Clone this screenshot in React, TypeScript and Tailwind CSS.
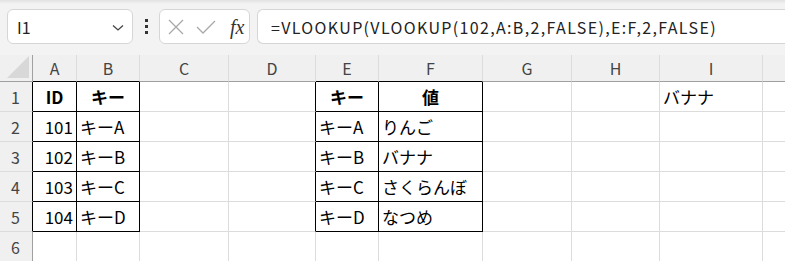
import React from "react";

const COLS = [
  { l: "A", w: 44 },
  { l: "B", w: 63 },
  { l: "C", w: 89 },
  { l: "D", w: 87 },
  { l: "E", w: 63 },
  { l: "F", w: 104 },
  { l: "G", w: 89 },
  { l: "H", w: 88 },
  { l: "I", w: 103 },
  { l: "", w: 60 },
];

type Cell = { t?: string; b?: boolean; align?: "l" | "c" | "r" };

const DATA: Record<string, Cell> = {
  A1: { t: "ID", b: true, align: "c" },
  B1: { t: "キー", b: true, align: "c" },
  A2: { t: "101", align: "r" },
  A3: { t: "102", align: "r" },
  A4: { t: "103", align: "r" },
  A5: { t: "104", align: "r" },
  B2: { t: "キーA" },
  B3: { t: "キーB" },
  B4: { t: "キーC" },
  B5: { t: "キーD" },
  E1: { t: "キー", b: true, align: "c" },
  F1: { t: "値", b: true, align: "c" },
  E2: { t: "キーA" },
  E3: { t: "キーB" },
  E4: { t: "キーC" },
  E5: { t: "キーD" },
  F2: { t: "りんご" },
  F3: { t: "バナナ" },
  F4: { t: "さくらんぼ" },
  F5: { t: "なつめ" },
  I1: { t: "バナナ" },
};

const inTable = (c: number, r: number) =>
  r >= 1 && r <= 5 && ((c >= 0 && c <= 1) || (c >= 4 && c <= 5));

const FONT = { fontFamily: '"Noto Sans CJK JP", "Noto Sans", sans-serif' };

export default function App() {
  const rows = [1, 2, 3, 4, 5, 6];
  return (
    <div className="w-[785px] h-[261px] overflow-hidden bg-white text-black" style={FONT}>
      {/* toolbar */}
      <div className="h-[55px] bg-[#f3f3f3] relative">
        <div className="absolute inset-x-0 top-0 h-[4px] bg-gradient-to-b from-[#e2e2e2] to-[#f3f3f3]" />
        <div className="flex items-start pt-[9px] pl-[7px] relative">
          <div className="w-[126px] h-[35px] bg-white border border-[#d6d6d6] rounded-[6px] flex items-center pl-[9px] pr-[8px]">
            <span className="text-[16px] text-[#222] leading-none flex-1">I1</span>
            <svg width="12" height="8" viewBox="0 0 12 8" className="mt-[2px]">
              <path d="M1 1.5 L6 6 L11 1.5" fill="none" stroke="#444" strokeWidth="1.3" />
            </svg>
          </div>
          <div className="w-[26px] h-[35px] flex flex-col items-center justify-center gap-[3px]">
            <div className="w-[3px] h-[3px] bg-[#333]" />
            <div className="w-[3px] h-[3px] bg-[#333]" />
            <div className="w-[3px] h-[3px] bg-[#333]" />
          </div>
          <div className="w-[91px] h-[35px] bg-white border border-[#d6d6d6] rounded-[6px] flex items-center pl-[8px]">
            <svg width="16" height="16" viewBox="0 0 16 16">
              <path d="M1 1 L15 15 M15 1 L1 15" stroke="#a8a8a8" strokeWidth="1.3" fill="none" />
            </svg>
            <svg width="20" height="16" viewBox="0 0 20 16" className="ml-[12px]">
              <path d="M1 8 L7 14 L19 2" stroke="#a8a8a8" strokeWidth="1.3" fill="none" />
            </svg>
            <span
              className="ml-[14px] text-[20px] italic text-[#333] leading-none"
              style={{ fontFamily: '"Liberation Serif", serif' }}
            >
              fx
            </span>
          </div>
          <div className="ml-[7px] flex-1 h-[35px] bg-white border border-[#d6d6d6] border-r-0 rounded-l-[6px] flex items-center pl-[13px]">
            <span className="text-[16px] text-[#222] leading-none tracking-[1.35px] whitespace-nowrap">
              =VLOOKUP(VLOOKUP(102,A:B,2,FALSE),E:F,2,FALSE)
            </span>
          </div>
        </div>
      </div>
      {/* grid */}
      <div className="flex flex-col">
        {/* column header */}
        <div className="flex h-[27px] bg-[#f0f0f0]">
          <div className="w-[33px] shrink-0 h-full border-r border-b border-[#a0a0a0] relative">
            <div className="absolute right-[3px] bottom-[3px] w-0 h-0 border-l-[22px] border-l-transparent border-b-[22px] border-b-[#d8d8d8]" />
          </div>
          {COLS.map((c, i) => (
            <div
              key={i}
              style={{ width: c.w }}
              className={
                "shrink-0 h-full flex items-center justify-center text-[16px] text-[#444] border-r border-r-[#dcdcdc] border-b " +
                (inTable(i, 1) ? "border-b-black" : "border-b-[#a0a0a0]")
              }
            >
              {c.l}
            </div>
          ))}
        </div>
        {rows.map((r) => (
          <div key={r} className="flex h-[30px]">
            <div
              className={
                "w-[33px] shrink-0 h-full bg-[#f0f0f0] flex items-center pl-[11px] text-[16px] text-[#444] border-b border-b-[#dcdcdc] border-r " +
                (inTable(0, r) ? "border-r-black" : "border-r-[#a0a0a0]")
              }
            >
              {r}
            </div>
            {COLS.map((c, i) => {
              const cell = c.l ? DATA[`${c.l}${r}`] : undefined;
              const self = inTable(i, r);
              const right = self || inTable(i + 1, r);
              const bottom = self || inTable(i, r + 1);
              const align = cell?.align ?? "l";
              return (
                <div
                  key={i}
                  style={{ width: c.w }}
                  className={
                    "shrink-0 h-full flex items-center text-[17px] leading-none border-r border-b whitespace-nowrap overflow-hidden " +
                    (right ? "border-r-black " : "border-r-[#dcdcdc] ") +
                    (bottom ? "border-b-black " : "border-b-[#dcdcdc] ") +
                    (align === "c" ? "justify-center " : align === "r" ? "justify-end pr-[3px] " : "justify-start pl-[3px] ") +
                    (cell?.b ? "font-bold" : "")
                  }
                >
                  {cell?.t}
                </div>
              );
            })}
          </div>
        ))}
      </div>
    </div>
  );
}
